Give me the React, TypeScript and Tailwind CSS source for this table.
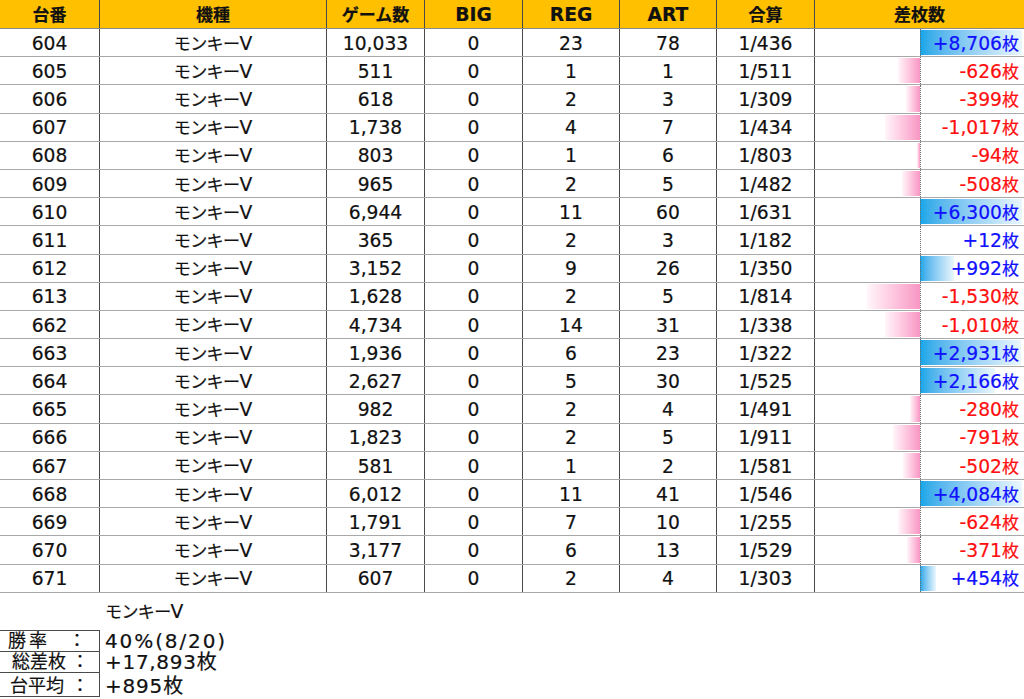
import React from "react";

type Row = [string, number, number, number, number, string, number];

const rows: Row[] = [
  ["604", 10033, 0, 23, 78, "1/436", 8706],
  ["605", 511, 0, 1, 1, "1/511", -626],
  ["606", 618, 0, 2, 3, "1/309", -399],
  ["607", 1738, 0, 4, 7, "1/434", -1017],
  ["608", 803, 0, 1, 6, "1/803", -94],
  ["609", 965, 0, 2, 5, "1/482", -508],
  ["610", 6944, 0, 11, 60, "1/631", 6300],
  ["611", 365, 0, 2, 3, "1/182", 12],
  ["612", 3152, 0, 9, 26, "1/350", 992],
  ["613", 1628, 0, 2, 5, "1/814", -1530],
  ["662", 4734, 0, 14, 31, "1/338", -1010],
  ["663", 1936, 0, 6, 23, "1/322", 2931],
  ["664", 2627, 0, 5, 30, "1/525", 2166],
  ["665", 982, 0, 2, 4, "1/491", -280],
  ["666", 1823, 0, 2, 5, "1/911", -791],
  ["667", 581, 0, 1, 2, "1/581", -502],
  ["668", 6012, 0, 11, 41, "1/546", 4084],
  ["669", 1791, 0, 7, 10, "1/255", -624],
  ["670", 3177, 0, 6, 13, "1/529", -371],
  ["671", 607, 0, 2, 4, "1/303", 454],
];

const fmt = (n: number) => n.toLocaleString("en-US");
const SCALE = 0.0346;
const POS_MAX = 102;

const J = ({ children, className = "" }: { children: React.ReactNode; className?: string }) => (
  <span className={`text-[17px] ${className}`}>{children}</span>
);

const cols = "grid grid-cols-[100px_227px_98px_98px_97px_97px_98px_1fr]";
const cell = "flex items-center justify-center pt-[3px] border-r border-[#4a4a4a]";

export default function App() {
  return (
    <div
      className="w-[1024px] h-[699px] overflow-hidden bg-white text-[#111] text-[18.7px] leading-none [-webkit-text-stroke:0.2px]"
      style={{ fontFamily: '"DejaVu Sans", "Noto Sans CJK JP", sans-serif' }}
    >
      {/* header */}
      <div className={`${cols} h-[29px] bg-[#ffc000] font-bold border-b border-[#8a8a8a]`}>
        <div className={cell}><J>台番</J></div>
        <div className={cell}><J>機種</J></div>
        <div className={cell}><J>ゲーム数</J></div>
        <div className={cell}>BIG</div>
        <div className={cell}>REG</div>
        <div className={cell}>ART</div>
        <div className={cell}><J>合算</J></div>
        <div className="flex items-center justify-center pt-[3px]"><J>差枚数</J></div>
      </div>
      {rows.map((r) => {
        const v = r[6];
        const pos = v >= 0;
        const w = Math.min(Math.abs(v) * SCALE, pos ? POS_MAX : 104);
        return (
          <div key={r[0]} className={`${cols} h-[28.2px] border-b border-[#a8a8a8]`}>
            <div className={cell}>{r[0]}</div>
            <div className={cell}>
              <J className="tracking-[-0.6px]">モンキー</J>V
            </div>
            <div className={cell}>{fmt(r[1])}</div>
            <div className={cell}>{r[2]}</div>
            <div className={cell}>{r[3]}</div>
            <div className={cell}>{r[4]}</div>
            <div className={cell}>{r[5]}</div>
            <div className="relative flex items-center justify-end pr-[5px] pt-[3px]">
              {pos ? (
                <div
                  className="absolute left-[105px] top-[1px] bottom-[1px] bg-gradient-to-r from-[#0ea6e8] to-[#eaf7fd]"
                  style={{ width: `${w}px` }}
                />
              ) : (
                <div
                  className="absolute right-[104px] top-[1px] bottom-[1px] bg-gradient-to-r from-[#fff6fa] to-[#f796c4]"
                  style={{ width: `${w}px` }}
                />
              )}
              <div className="absolute left-[105px] top-0 bottom-0 border-l border-dotted border-[#6a6a6a]" />
              <span className={`relative ${pos ? "text-[#1010ff]" : "text-[#ff1010]"}`}>
                {pos ? "+" : "-"}
                {fmt(Math.abs(v))}
                <J>枚</J>
              </span>
            </div>
          </div>
        );
      })}
      {/* summary */}
      <div className="h-[37px] flex items-center pl-[105px] pt-[3px]">
        <J className="tracking-[-0.6px]">モンキー</J>V
      </div>
      <div className="flex flex-col text-[20px]">
        {[
          ["勝率", "40%(8/20)", "pl-[8px] tracking-[3px]", "tracking-[1.9px]"],
          ["総差枚", "+17,893枚", "pl-[12px]", "tracking-[0.7px]"],
          ["台平均", "+895枚", "pl-[10px]", "tracking-[0.8px]"],
        ].map(([l, val, pl, tr], i) => (
          <div key={l} className={`flex ${i === 0 ? "h-[22px]" : i === 1 ? "h-[21px]" : "h-[24px]"}`}>
            <div
              className={`w-[100px] flex items-end justify-between pr-[10px] pb-[2px] border-r border-b border-[#4a4a4a] leading-[17px] ${
                i === 0 ? "border-t" : ""
              } ${pl}`}
            >
              <span className="text-[18px]">{l}</span>
              <span className="text-[18px]">：</span>
            </div>
            <div className={`flex items-end pl-[5px] pb-[2px] leading-[17px] ${tr}`}>{val}</div>
          </div>
        ))}
      </div>
    </div>
  );
}
